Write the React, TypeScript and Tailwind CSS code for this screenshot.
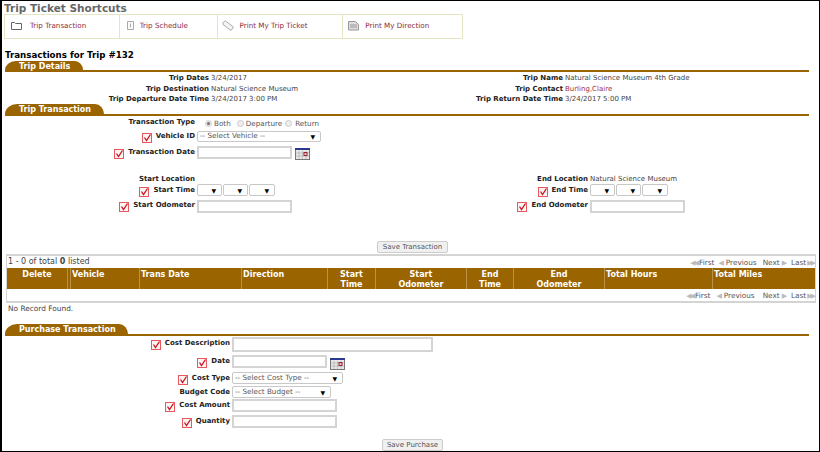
const Check = () => (
  <svg width="10" height="10" viewBox="0 0 10 10" className="shrink-0 mt-[3px] mr-[4px]">
    <rect x="0.5" y="0.5" width="9" height="9" fill="#fdf3f3" stroke="#e8585f" />
    <path d="M2.5 4.5 L4.5 7.5 L8.5 1.5" fill="none" stroke="#c8141e" strokeWidth="1.3" />
  </svg>
);

const Calendar = () => (
  <svg width="15" height="12" viewBox="0 0 15 12" className="shrink-0">
    <rect x="0.5" y="0.5" width="14" height="11" fill="#e8e8e8" stroke="#777" />
    <rect x="0" y="0" width="15" height="2" fill="#2b3a8c" />
    <path d="M1 5h13M1 8h13M4 3v8M7.5 3v8M11 3v8" stroke="#aaa" strokeWidth="0.6" />
    <rect x="9" y="4.5" width="3" height="3" fill="none" stroke="#a02030" />
  </svg>
);

const TextInput = ({ className }: { className: string }) => (
  <div className={`border-2 border-[#d4d4d4] bg-white shrink-0 ${className}`} />
);

const Select = ({ label, className }: { label?: string; className: string }) => (
  <div className={`flex items-center justify-between rounded-[2px] border border-[#c8c8c8] bg-white pl-[2px] pr-[5px] text-[7.2px] text-[#555] shrink-0 ${className}`}>
    <span>{label}</span>
    <span className="text-[6px] text-black">▼</span>
  </div>
);

const Label = ({ text, check, className }: { text: string; check?: boolean; className: string }) => (
  <div className={`flex justify-end items-start shrink-0 pr-[2px] font-bold text-[7px] leading-[12px] text-[#222] ${className}`}>
    {check && <Check />}
    <span>{text}</span>
  </div>
);

const Tab = ({ title, className }: { title: string; className: string }) => (
  <div className="ml-[3px] mr-[10px] border-b-2 border-[#9a6400]">
    <div className={`rounded-tl-[12px_10px] rounded-tr-[9px_10px] bg-[#9a6400] pl-[14px] pt-[1px] text-white font-bold text-[8px] leading-[10px] ${className}`}>
      {title}
    </div>
  </div>
);

const Pager = ({ firstGap, nextGap, className }: { firstGap: string; nextGap: string; className: string }) => (
  <div className={`flex items-center pr-[1px] text-[7.3px] text-[#555] ${className}`}>
    <span className="text-[7px] text-[#bbb] tracking-[-2px] mr-[2px]">◀◀</span>
    <span>First</span>
    <span className={`text-[7px] text-[#bbb] mr-[2px] ${firstGap}`}>◀</span>
    <span>Previous</span>
    <span className={nextGap}>Next</span>
    <span className="text-[7px] text-[#bbb] ml-[2px] mr-[4px]">▶</span>
    <span>Last</span>
    <span className="text-[7px] text-[#bbb] tracking-[-2px] ml-[1px]">▶▶</span>
  </div>
);

const shortcuts = [
  { text: "Trip Transaction", w: "w-[115px]", pl: "pl-[6px]", gap: "gap-[7px]", icon: <path d="M0.5 2.5h3l1 1h6v6h-10z" fill="none" stroke="#666" strokeWidth="1" /> },
  { text: "Trip Schedule", w: "w-[98px]", pl: "pl-[7px]", gap: "gap-[1px]", icon: <path d="M0.5 1.5h6v8h-6zM3.5 3.5v4" fill="#fafafa" stroke="#aaa" strokeWidth="1" /> },
  { text: "Print My Trip Ticket", w: "w-[126px]", pl: "pl-[4px]", gap: "gap-[6px]", icon: <path d="M1 2.5l2.5-1.5 8 6-2.5 3.5-8-6z" fill="#f4f4f4" stroke="#aaa" strokeWidth="1" /> },
  { text: "Print My Direction", w: "w-[119px]", pl: "pl-[5px]", gap: "gap-[5px]", icon: <path d="M0.5 1.5h7l3 3v5.500h-10zM2 5h7M2 7h7" fill="#ddd" stroke="#999" strokeWidth="1" /> },
];

const columns = [
  { label: "Delete", w: "w-[61px]", center: true },
  { label: "", w: "w-[3px]" },
  { label: "Vehicle", w: "w-[69px]" },
  { label: "Trans Date", w: "w-[102px]" },
  { label: "Direction", w: "w-[86px]" },
  { label: "Start Time", w: "w-[48px]", center: true },
  { label: "Start Odometer", w: "w-[91px]", center: true },
  { label: "End Time", w: "w-[47px]", center: true },
  { label: "End Odometer", w: "w-[91px]", center: true },
  { label: "Total Hours", w: "w-[108px]" },
  { label: "Total Miles", w: "flex-1" },
];

const TimeSelects = () => (
  <div className="flex gap-[1px]">
    <Select className="w-[25px] h-[12px]" />
    <Select className="w-[25px] h-[12px]" />
    <Select className="w-[26px] h-[12px]" />
  </div>
);

export default function App() {
  return (
    <div className="relative h-[452px] w-[820px] overflow-hidden border-t border-l-2 border-r border-b border-black bg-white font-['DejaVu_Sans',sans-serif] text-[7px] text-[#444]">
      <h1 className="h-[13px] pl-[2px] text-[10.5px] leading-[14px] font-bold text-[#666]">Trip Ticket Shortcuts</h1>

      <div className="ml-[2px] flex h-[25px] w-[459px] border border-[#e6e6c4]">
        {shortcuts.map((s) => (
          <div key={s.text} className={`flex items-center border-r border-[#e6e6c4] last:border-r-0 ${s.w} ${s.pl} ${s.gap}`}>
            <svg width="12" height="11" viewBox="0 0 12 11" className="-mt-[3px] shrink-0">{s.icon}</svg>
            <span className="text-[7.2px] text-[#8e2c3c]">{s.text}</span>
          </div>
        ))}
      </div>

      <div className="mt-[9px] h-[13px] pl-[3px] text-[8.7px] leading-[14px] font-bold text-black">Transactions for Trip #132</div>

      <Tab title="Trip Details" className="w-[78px] h-[9px]" />
      <div className="flex h-[32px] pt-[1px] leading-[10.5px]">
        <div className="w-[490px] shrink-0">
          {[["Trip Dates", "3/24/2017"], ["Trip Destination", "Natural Science Museum"], ["Trip Departure Date Time", "3/24/2017 3:00 PM"]].map(([k, v]) => (
            <div key={k} className="flex"><span className="w-[209px] pr-[2px] text-right font-bold text-[#222]">{k}</span><span>{v}</span></div>
          ))}
        </div>
        <div className="flex-1">
          {[["Trip Name", "Natural Science Museum 4th Grade"], ["Trip Contact", "Burling,Claire"], ["Trip Return Date Time", "3/24/2017 5:00 PM"]].map(([k, v]) => (
            <div key={k} className="flex"><span className="flex w-[73px] justify-end whitespace-nowrap pr-[2px] font-bold text-[#222]">{k}</span><span className={k === "Trip Contact" ? "text-[#a03040]" : ""}>{v}</span></div>
          ))}
        </div>
      </div>

      <Tab title="Trip Transaction" className="w-[99px] h-[10px]" />

      <div className="flex h-[11px]">
        <Label text="Transaction Type" className="w-[195px]" />
        <div className="ml-[8px] mt-[3px] flex items-center text-[7.2px] leading-[11px] text-[#555]">
          <span className="mr-[2px] h-[7px] w-[7px] rounded-full border-2 border-[#ddd] bg-[#777]" />Both
          <span className="ml-[6px] mr-[2px] h-[7px] w-[7px] rounded-full border border-[#ccc] bg-[#eee]" />Departure
          <span className="ml-[3px] mr-[3px] h-[7px] w-[7px] rounded-full border border-[#ccc] bg-[#eee]" />Return
        </div>
      </div>
      <div className="mt-[3px] flex h-[13px]">
        <Label text="Vehicle ID" check className="w-[195px]" />
        <Select label="-- Select Vehicle --" className="mt-[1px] w-[124px] h-[11px]" />
      </div>
      <div className="mt-[3px] flex h-[14px]">
        <Label text="Transaction Date" check className="w-[195px]" />
        <TextInput className="w-[95px] h-[13px]" />
        <div className="ml-[3px] mt-[2px]"><Calendar /></div>
      </div>

      <div className="mt-[13px] flex">
        <div className="w-[393px] shrink-0">
          <div className="flex h-[11px]"><Label text="Start Location" className="w-[195px]" /></div>
          <div className="flex h-[12px]">
            <Label text="Start Time" check className="w-[195px]" />
            <TimeSelects />
          </div>
          <div className="mt-[3px] flex h-[14px]">
            <Label text="Start Odometer" check className="w-[195px]" />
            <TextInput className="mt-[1px] w-[95px] h-[13px]" />
          </div>
        </div>
        <div className="flex-1">
          <div className="flex h-[11px]">
            <Label text="End Location" className="w-[195px]" />
            <span className="leading-[12px]">Natural Science Museum</span>
          </div>
          <div className="flex h-[12px]">
            <Label text="End Time" check className="w-[195px]" />
            <TimeSelects />
          </div>
          <div className="mt-[3px] flex h-[14px]">
            <Label text="End Odometer" check className="w-[195px]" />
            <TextInput className="mt-[1px] w-[95px] h-[13px]" />
          </div>
        </div>
      </div>

      <div className="mt-[28px] flex justify-center pl-[4px]">
        <button className="h-[12px] w-[71px] rounded-[2px] border border-[#ccc] bg-[#f0f0f0] text-[7px] leading-[10px] text-[#555]">Save Transaction</button>
      </div>

      <div className="ml-[4px] mt-[1px] w-[810px] border-x border-y-2 border-[#d4d4d4]">
        <div className="flex h-[12px] items-center justify-between pl-[1px] text-[8px] text-[#444]">
          <span>1 - 0 of total <b>0</b> listed</span>
          <Pager firstGap="ml-[4px]" nextGap="ml-[6px]" className="mt-[2px]" />
        </div>
        <div className="flex h-[21px] bg-[#9a6400] text-[8px] font-bold leading-[9.5px] text-white">
          {columns.map((c, i) => (
            <div key={i} className={`flex border-r border-[#b99245] pt-[2px] last:border-r-0 ${c.w} ${c.center ? "justify-center text-center" : "pl-[1px]"}`}>
              <span className={c.center ? "w-min" : ""}>{c.label}</span>
            </div>
          ))}
        </div>
        <div className="flex h-[12px] items-center justify-end">
          <Pager firstGap="ml-[6px]" nextGap="ml-[8px]" className="mt-[3px]" />
        </div>
      </div>

      <div className="h-[10px] pl-[6px] text-[7.4px] leading-[12px] text-[#444]">No Record Found.</div>

      <div className="mt-[11px]">
        <Tab title="Purchase Transaction" className="w-[123px] h-[10px]" />
      </div>

      <div className="mt-[1px] flex h-[15px]">
        <Label text="Cost Description" check className="w-[230px]" />
        <TextInput className="w-[201px] h-[15px]" />
      </div>
      <div className="mt-[3px] flex h-[14px]">
        <Label text="Date" check className="w-[230px]" />
        <TextInput className="w-[95px] h-[13px]" />
        <div className="ml-[3px] mt-[3px]"><Calendar /></div>
      </div>
      <div className="mt-[3px] flex h-[12px]">
        <Label text="Cost Type" check className="w-[230px]" />
        <Select label="-- Select Cost Type --" className="w-[111px] h-[12px]" />
      </div>
      <div className="mt-[2px] flex h-[12px]">
        <Label text="Budget Code" className="w-[230px]" />
        <Select label="-- Select Budget --" className="w-[99px] h-[12px]" />
      </div>
      <div className="mt-[1px] flex h-[13px]">
        <Label text="Cost Amount" check className="w-[230px]" />
        <TextInput className="w-[105px] h-[13px]" />
      </div>
      <div className="mt-[3px] flex h-[13px]">
        <Label text="Quantity" check className="w-[230px]" />
        <TextInput className="w-[105px] h-[13px]" />
      </div>
      <div className="mt-[11px] flex justify-center pl-[4px]">
        <button className="h-[12px] w-[61px] rounded-[2px] border border-[#ccc] bg-[#f0f0f0] text-[7px] leading-[10px] text-[#555]">Save Purchase</button>
      </div>
    </div>
  );
}
